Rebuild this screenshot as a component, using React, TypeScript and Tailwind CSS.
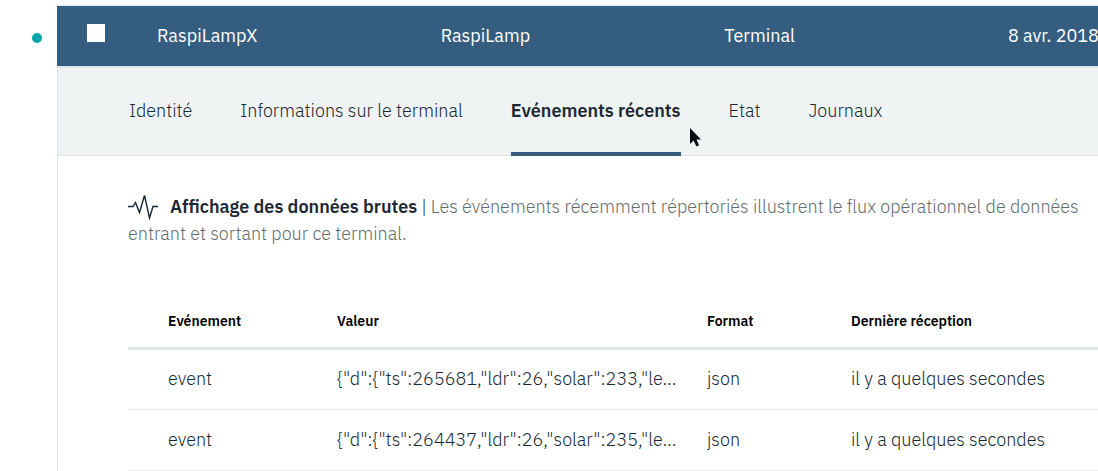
import { useState } from "react";

const device = { id: "RaspiLampX", type: "RaspiLamp", kind: "Terminal", added: "8 avr. 2018" };

const tabs = ["Identité", "Informations sur le terminal", "Evénements récents", "Etat", "Journaux"];

const events = [
  { name: "event", value: '{"d":{"ts":265681,"ldr":26,"solar":233,"le...', format: "json", received: "il y a quelques secondes" },
  { name: "event", value: '{"d":{"ts":264437,"ldr":26,"solar":235,"le...', format: "json", received: "il y a quelques secondes" },
];

function DeviceRow() {
  return (
    <div className="flex h-[60px] items-center bg-[#355d7f] text-lg text-white">
      <input
        type="checkbox"
        aria-label="Sélectionner RaspiLampX"
        className="mb-1.5 ml-[30px] size-[18px] shrink-0 appearance-none bg-white"
      />
      <div className="ml-[52px] grid flex-1 grid-cols-[repeat(3,minmax(0,1fr))_90px] whitespace-nowrap">
        <span>{device.id}</span>
        <span>{device.type}</span>
        <span>{device.kind}</span>
        <span>{device.added}</span>
      </div>
    </div>
  );
}

function Tabs() {
  const [active, setActive] = useState(2);
  return (
    <div role="tablist" className="flex h-[90px] gap-12 border-t-2 border-b border-[#dfe6e6] bg-[#eff3f4] pl-[71px]">
      {tabs.map((label, i) => (
        <button
          key={label}
          type="button"
          role="tab"
          aria-selected={i === active}
          onClick={() => setActive(i)}
          className={
            i === active
              ? "-mb-px border-b-4 border-[#355d7f] pt-0.5 text-lg font-semibold whitespace-nowrap text-[#1d2935]"
              : "-mb-px border-b-4 border-transparent pt-0.5 text-lg font-light whitespace-nowrap text-[#152934]"
          }
        >
          {label}
        </button>
      ))}
    </div>
  );
}

function Intro() {
  return (
    <p className="pr-4 text-lg leading-[27px] font-light text-[#636c6c]">
      <svg viewBox="0 0 30 26" className="-mt-[5px] mr-3 -mb-[3px] inline-block h-[26px] w-[30px] align-middle" fill="none" stroke="#152934" strokeWidth="1.4" aria-hidden="true">
        <path d="M0 12.5h5l2.500-4 4 10L16.500 1.500l5 22.500 3.500-11.500h5" />
      </svg>
      <strong className="font-semibold text-[#1d2935]">Affichage des données brutes</strong>
      <span className="text-[#152934]"> | </span>
      Les événements récemment répertoriés illustrent le flux opérationnel de données entrant et sortant pour ce terminal.
    </p>
  );
}

function EventTable() {
  return (
    <table className="mt-12 w-full table-fixed text-left whitespace-nowrap">
      <thead>
        <tr className="h-[53px] border-b-3 border-[#dfe9e8] text-sm text-black">
          <th className="w-[209px] pl-10 font-semibold">Evénement</th>
          <th className="font-semibold">Valeur</th>
          <th className="w-36 font-semibold">Format</th>
          <th className="w-[247px] font-semibold">Dernière réception</th>
        </tr>
      </thead>
      <tbody className="text-lg font-light text-[#152934]">
        {events.map((event) => (
          <tr key={event.value} className="h-[61px] border-b border-[#e5eaea]">
            <td className="pl-10">{event.name}</td>
            <td>{event.value}</td>
            <td>{event.format}</td>
            <td>{event.received}</td>
          </tr>
        ))}
      </tbody>
    </table>
  );
}

function Pointer() {
  return (
    <svg viewBox="0 0 12 20" className="pointer-events-none absolute top-[127px] left-[689px] h-5 w-3" aria-hidden="true">
      <path d="M1 1v16l3.500-3.500L7.500 19.500l2.500-1.200-2.500-5.800H12z" fill="#080b10" />
    </svg>
  );
}

export default function App() {
  return (
    <div className="relative flex min-h-screen overflow-hidden bg-white font-['IBM_Plex_Sans',Roboto,sans-serif]">
      <div className="w-[57px] shrink-0 pt-[33px] pl-8">
        <span className="block size-[10px] rounded-full bg-[#00a6a8]" />
      </div>
      <main className="min-w-0 flex-1">
        <div className="h-[6px] border-b border-[#dfe6e6] bg-[#fbfcfc]" />
        <DeviceRow />
        <div className="border-l border-[#dfe6e6]">
          <Tabs />
          <div className="pt-[37px] pl-[70px]">
            <Intro />
            <EventTable />
          </div>
        </div>
      </main>
      <Pointer />
    </div>
  );
}
